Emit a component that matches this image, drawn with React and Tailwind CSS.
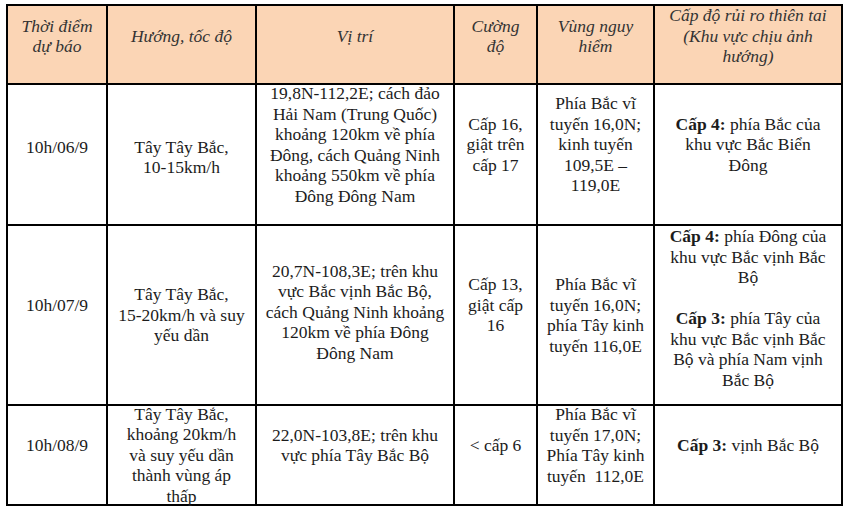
import React from 'react';

const B = ({ children }) => <span className="font-bold">{children}</span>;

const header = [
  ['Thời điểm', 'dự báo'],
  ['Hướng, tốc độ'],
  ['Vị trí'],
  ['Cường', 'độ'],
  ['Vùng nguy', 'hiểm'],
  ['Cấp độ rủi ro thiên tai', '(Khu vực chịu ảnh', 'hướng)'],
];

// each cell: lines + extra classes for vertical placement
const rows = [
  [
    { lines: ['10h/06/9'], cls: 'justify-center pb-[14px]' },
    { lines: ['Tây Tây Bắc,', '10-15km/h'], cls: 'justify-center pt-[5px]' },
    {
      lines: [
        '19,8N-112,2E; cách đảo',
        'Hải Nam (Trung Quốc)',
        'khoảng 120km về phía',
        'Đông, cách Quảng Ninh',
        'khoảng 550km về phía',
        'Đông Đông Nam',
      ],
      cls: 'justify-center pb-5',
    },
    { lines: ['Cấp 16,', 'giật trên', 'cấp 17'], cls: 'justify-center pb-5' },
    { lines: ['Phía Bắc vĩ', 'tuyến 16,0N;', 'kinh tuyến', '109,5E –', '119,0E'], cls: 'justify-center pb-5' },
    {
      lines: [<><B>Cấp 4:</B> phía Bắc của</>, 'khu vực Bắc Biển', 'Đông'],
      cls: 'justify-center pb-5',
    },
  ],
  [
    { lines: ['10h/07/9'], cls: 'justify-center pb-5' },
    { lines: ['Tây Tây Bắc,', '15-20km/h và suy', 'yếu dần'], cls: 'justify-center' },
    {
      lines: [
        '20,7N-108,3E; trên khu',
        'vực Bắc vịnh Bắc Bộ,',
        'cách Quảng Ninh khoảng',
        '120km về phía Đông',
        'Đông Nam',
      ],
      cls: 'justify-center pb-[6px]',
    },
    { lines: ['Cấp 13,', 'giật cấp', '16'], cls: 'justify-center pb-5' },
    { lines: ['Phía Bắc vĩ', 'tuyến 16,0N;', 'phía Tây kinh', 'tuyến 116,0E'], cls: 'justify-center' },
    {
      lines: [
        <><B>Cấp 4:</B> phía Đông của</>,
        'khu vực Bắc vịnh Bắc',
        'Bộ',
        '\u00a0',
        <><B>Cấp 3:</B> phía Tây của</>,
        'khu vực Bắc vịnh Bắc',
        'Bộ và phía Nam vịnh',
        'Bắc Bộ',
      ],
      cls: 'justify-start',
    },
  ],
  [
    { lines: ['10h/08/9'], cls: 'justify-center pb-5' },
    {
      lines: ['Tây Tây Bắc,', 'khoảng 20km/h', 'và suy yếu dần', 'thành vùng áp', 'thấp'],
      cls: 'justify-center',
    },
    { lines: ['22,0N-103,8E; trên khu', 'vực phía Tây Bắc Bộ'], cls: 'justify-center pb-5' },
    { lines: ['< cấp 6'], cls: 'justify-center pb-5' },
    { lines: ['Phía Bắc vĩ', 'tuyến 17,0N;', 'Phía Tây kinh', 'tuyến  112,0E'], cls: 'justify-center pb-5' },
    { lines: [<><B>Cấp 3:</B> vịnh Bắc Bộ</>], cls: 'justify-center pb-5' },
  ],
];

const Cell = ({ lines, cls, head }) => (
  <div
    className={`flex flex-col items-center overflow-visible border-r-2 border-b-2 border-black text-center ${
      head ? 'bg-[#fbd5b5] italic text-[#333333]' : 'text-[#1c1c1c]'
    } ${cls}`}
  >
    {lines.map((l, i) => (
      <div key={i} className="whitespace-pre">
        {l}
      </div>
    ))}
  </div>
);

export default function App() {
  return (
    <div className="w-[851px] h-[516px] bg-white pl-[6px] pt-[4px] font-[Liberation_Serif,serif] text-[17.5px] leading-[20.5px]">
      <div className="grid w-fit grid-cols-[100px_149px_198px_83px_117px_188px] grid-rows-[79px_141px_180px_100px] border-l-2 border-t-2 border-black">
        {header.map((h, i) => (
          <Cell key={'h' + i} lines={h} head cls="justify-center pb-[17px]" />
        ))}
        {rows.map((r, ri) =>
          r.map((c, ci) => <Cell key={ri + '-' + ci} lines={c.lines} cls={c.cls} />)
        )}
      </div>
    </div>
  );
}
